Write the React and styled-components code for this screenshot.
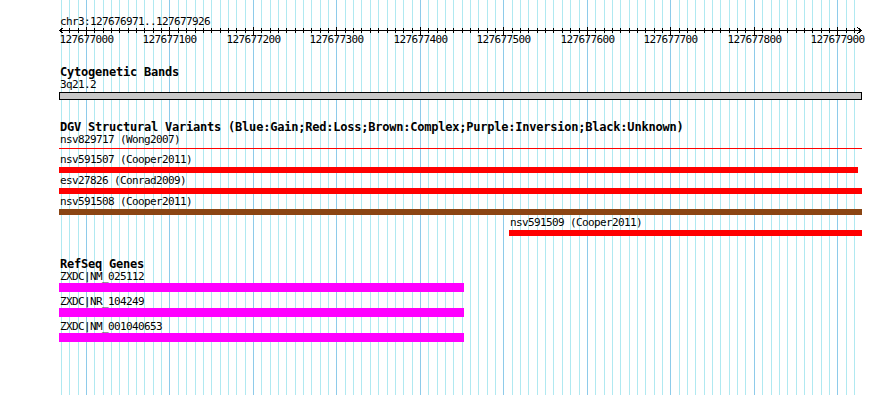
import React from "react";
import styled, { createGlobalStyle } from "styled-components";

const GlobalStyle = createGlobalStyle`
  html, body {
    margin: 0;
    padding: 0;
    background: #ffffff;
  }
`;

// scale: page x of 127677000 and pixels per base
const ORIGIN_BP = 127677000;
const ORIGIN_X = 86;
const PX_PER_BP = 0.8348;
const bpToX = (bp) => Math.round(ORIGIN_X + (bp - ORIGIN_BP) * PX_PER_BP);

const stops = [];
for (let bp = 127676970; bp <= 127677920; bp += 10) stops.push(bp);

const dgv = [
  { name: "nsv829717 (Wong2007)", x: 59, w: 803, color: "#ff0000", thin: true },
  { name: "nsv591507 (Cooper2011)", x: 59, w: 799, color: "#ff0000" },
  { name: "esv27826 (Conrad2009)", x: 59, w: 803, color: "#ff0000" },
  { name: "nsv591508 (Cooper2011)", x: 59, w: 803, color: "#8b4513" },
  { name: "nsv591509 (Cooper2011)", x: 509, w: 353, color: "#ff0000" },
];

const genes = [
  { name: "ZXDC|NM_025112", x: 59, w: 405 },
  { name: "ZXDC|NR_104249", x: 59, w: 405 },
  { name: "ZXDC|NM_001040653", x: 59, w: 405 },
];

const Grid = () => (
  <GridLayer viewBox="0 0 890 395">
    {stops.map((bp) => (
      <rect
        key={bp}
        x={bpToX(bp)}
        y={0}
        width={1}
        height={395}
        fill={(bp - ORIGIN_BP) % 100 === 0 ? "#8ecbea" : "#b0e9f1"}
      />
    ))}
  </GridLayer>
);

const Axis = () => (
  <AxisSvg viewBox="0 0 890 22">
    <line x1={59.5} y1={3.5} x2={861.5} y2={3.5} stroke="#000" />
    <polyline points="63.5,0.5 59.5,3.5 63.5,6.5" fill="none" stroke="#000" />
    <polyline points="857.5,0.5 861.5,3.5 857.5,6.5" fill="none" stroke="#000" />
    {stops.map((bp) => {
      const major = (bp - ORIGIN_BP) % 100 === 0;
      return (
        <rect
          key={bp}
          x={bpToX(bp)}
          y={major ? 0 : 1}
          width={1}
          height={major ? 8 : 5}
          fill="#000"
        />
      );
    })}
    {stops
      .filter((bp) => (bp - ORIGIN_BP) % 100 === 0)
      .map((bp) => (
        <TickLabel key={bp} x={bpToX(bp) + 0.5} y={16} textAnchor="middle">
          {bp}
        </TickLabel>
      ))}
  </AxisSvg>
);

export default function App() {
  return (
    <>
      <GlobalStyle />
      <Panel>
        <Grid />
        <Content>
          <Ruler>
            <SmallText $x={60}>chr3:127676971..127677926</SmallText>
            <Axis />
          </Ruler>

          <Track $gap={18}>
            <TrackTitle>Cytogenetic Bands</TrackTitle>
            <SmallText $x={60} $top={1}>3q21.2</SmallText>
            <Band />
          </Track>

          <Track $gap={22}>
            <TrackTitle>
              DGV Structural Variants
              (Blue:Gain;Red:Loss;Brown:Complex;Purple:Inversion;Black:Unknown)
            </TrackTitle>
            {dgv.map((f, i) => (
              <FeatureRow key={f.name} $h={f.thin ? 19 : 21} $pad={i === 0 ? 1 : 2}>
                <SmallText $x={f.x + 1}>{f.name}</SmallText>
                <Bar
                  $color={f.color}
                  $h={f.thin ? 1 : 6}
                  $mb={f.thin ? 3 : 0}
                  style={{ marginLeft: f.x, width: f.w }}
                />
              </FeatureRow>
            ))}
          </Track>

          <Track $gap={23}>
            <TrackTitle>RefSeq Genes</TrackTitle>
            {genes.map((g) => (
              <FeatureRow key={g.name} $h={25} $pad={1}>
                <SmallText $x={g.x + 1}>{g.name}</SmallText>
                <Bar
                  $color="#ff00ff"
                  $h={9}
                  $mb={3}
                  style={{ marginLeft: g.x, width: g.w }}
                />
              </FeatureRow>
            ))}
          </Track>
        </Content>
      </Panel>
    </>
  );
}

const Panel = styled.div`
  position: relative;
  width: 890px;
  height: 395px;
  overflow: hidden;
  background: #ffffff;
  color: #000000;
  font-family: "DejaVu Sans Mono", "Liberation Mono", monospace;
`;

const GridLayer = styled.svg`
  position: absolute;
  top: 0;
  left: 0;
  width: 890px;
  height: 395px;
  shape-rendering: crispEdges;
`;

const Content = styled.div`
  position: relative;
  display: flex;
  flex-direction: column;
`;

const Ruler = styled.div`
  display: flex;
  flex-direction: column;
  padding-top: 16px;
`;

const AxisSvg = styled.svg`
  display: block;
  width: 890px;
  height: 22px;
  shape-rendering: crispEdges;
`;

const TickLabel = styled.text`
  font-family: "DejaVu Sans Mono", "Liberation Mono", monospace;
  font-size: 11px;
  letter-spacing: -0.62px;
  fill: #000;
`;

const SmallText = styled.div`
  margin-top: ${({ $top = 0 }) => $top}px;
  padding-left: ${({ $x }) => $x}px;
  font-size: 11px;
  letter-spacing: -0.62px;
  line-height: 11px;
  height: 11px;
  white-space: nowrap;
`;

const Track = styled.section`
  display: flex;
  flex-direction: column;
  margin-top: ${({ $gap }) => $gap}px;
`;

const TrackTitle = styled.h3`
  margin: 0;
  padding-left: 60px;
  font-size: 12px;
  font-weight: bold;
  letter-spacing: -0.22px;
  line-height: 11px;
  height: 11px;
  white-space: nowrap;
`;

const Band = styled.div`
  box-sizing: border-box;
  margin: 2px 0 0 59px;
  width: 803px;
  height: 8px;
  border: 1px solid #000;
  background: #c8c8c8;
`;

const FeatureRow = styled.div`
  box-sizing: border-box;
  display: flex;
  flex-direction: column;
  height: ${({ $h }) => $h}px;
  padding-top: ${({ $pad }) => $pad}px;
`;

const Bar = styled.div`
  margin-top: auto;
  margin-bottom: ${({ $mb }) => $mb}px;
  height: ${({ $h }) => $h}px;
  background: ${({ $color }) => $color};
`;
